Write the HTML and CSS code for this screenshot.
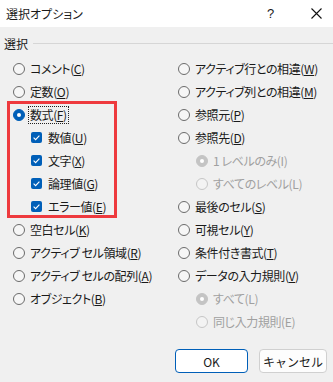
FILE: index.html
```html
<!DOCTYPE html>
<html lang="ja">
<head>
  <meta charset="UTF-8" />
  <title>選択オプション</title>
  <link rel="stylesheet" href="styles.css">
</head>
<body>
  <div class="dialog">
    <div class="titlebar">
      <span class="title">選択オプション</span>
      <span class="help">?</span>
      <span class="close">
        <svg width="11" height="11" viewBox="0 0 11 11"><path d="M0.5 0.5 L10.5 10.5 M10.5 0.5 L0.5 10.5" stroke="#111" stroke-width="1.1" fill="none"/></svg>
      </span>
    </div>

    <div class="group-label">
      <span>選択</span>
      <span class="rule"></span>
    </div>

    <div class="columns">
      <!-- 左の列 -->
      <div class="col">
        <div class="opt"><span class="radio"></span><span class="text">コメント(<u>C</u>)</span></div>
        <div class="opt"><span class="radio"></span><span class="text">定数(<u>O</u>)</span></div>

        <div class="highlight">
          <div class="opt"><span class="radio checked"></span><span class="text focus">数式(<u>F</u>)</span></div>
          <div class="opt sub"><span class="check"><svg width="11" height="11" viewBox="0 0 11 11"><path d="M2.6 5.7 L4.6 7.6 L8.4 3.6" stroke="#fff" stroke-width="1.1" fill="none"/></svg></span><span class="text">数値(<u>U</u>)</span></div>
          <div class="opt sub"><span class="check"><svg width="11" height="11" viewBox="0 0 11 11"><path d="M2.6 5.7 L4.6 7.6 L8.4 3.6" stroke="#fff" stroke-width="1.1" fill="none"/></svg></span><span class="text">文字(<u>X</u>)</span></div>
          <div class="opt sub"><span class="check"><svg width="11" height="11" viewBox="0 0 11 11"><path d="M2.6 5.7 L4.6 7.6 L8.4 3.6" stroke="#fff" stroke-width="1.1" fill="none"/></svg></span><span class="text">論理値(<u>G</u>)</span></div>
          <div class="opt sub"><span class="check"><svg width="11" height="11" viewBox="0 0 11 11"><path d="M2.6 5.7 L4.6 7.6 L8.4 3.6" stroke="#fff" stroke-width="1.1" fill="none"/></svg></span><span class="text">エラー値(<u>E</u>)</span></div>
        </div>

        <div class="opt"><span class="radio"></span><span class="text">空白セル(<u>K</u>)</span></div>
        <div class="opt"><span class="radio"></span><span class="text">アクティブ セル領域(<u>R</u>)</span></div>
        <div class="opt"><span class="radio"></span><span class="text">アクティブ セルの配列(<u>A</u>)</span></div>
        <div class="opt"><span class="radio"></span><span class="text">オブジェクト(<u>B</u>)</span></div>
      </div>

      <!-- 右の列 -->
      <div class="col">
        <div class="opt"><span class="radio"></span><span class="text">アクティブ行との相違(<u>W</u>)</span></div>
        <div class="opt"><span class="radio"></span><span class="text">アクティブ列との相違(<u>M</u>)</span></div>
        <div class="opt"><span class="radio"></span><span class="text">参照元(<u>P</u>)</span></div>
        <div class="opt"><span class="radio"></span><span class="text">参照先(<u>D</u>)</span></div>
        <div class="opt sub disabled"><span class="radio checked"></span><span class="text">1 レベルのみ(I)</span></div>
        <div class="opt sub disabled"><span class="radio"></span><span class="text">すべてのレベル(L)</span></div>
        <div class="opt"><span class="radio"></span><span class="text">最後のセル(<u>S</u>)</span></div>
        <div class="opt"><span class="radio"></span><span class="text">可視セル(<u>Y</u>)</span></div>
        <div class="opt"><span class="radio"></span><span class="text">条件付き書式(<u>T</u>)</span></div>
        <div class="opt"><span class="radio"></span><span class="text">データの入力規則(<u>V</u>)</span></div>
        <div class="opt sub disabled"><span class="radio checked"></span><span class="text">すべて(L)</span></div>
        <div class="opt sub disabled"><span class="radio"></span><span class="text">同じ入力規則(E)</span></div>
      </div>
    </div>

    <div class="buttons">
      <button class="btn btn-default">OK</button>
      <button class="btn">キャンセル</button>
    </div>
  </div>
</body>
</html>
```

FILE: styles.css
```css
body {
  margin: 0;
  padding: 0;
  background-color: #f0f0f0;
  font-family: "Noto Sans CJK JP", "Noto Sans", sans-serif;
  font-size: 12px;
  color: #1a1a1a;
  font-feature-settings: "palt";
}

.dialog {
  width: 333px;
  height: 382px;
  overflow: hidden;
}

.titlebar {
  height: 27px;
  background-color: #fff;
  display: flex;
  align-items: center;
  padding-left: 6px;
  box-sizing: border-box;
}

.title {
  flex: 1;
  line-height: 14px;
}

.help {
  width: 10px;
  margin-right: 34px;
  font-family: "Liberation Sans", sans-serif;
  font-size: 13px;
}

.close {
  width: 11px;
  height: 11px;
  margin-right: 11px;
  display: flex;
}

.group-label {
  height: 30px;
  display: flex;
  align-items: center;
  padding: 2px 0 0 4px;
  box-sizing: border-box;
  gap: 5px;
}

.rule {
  flex: 1;
  height: 1px;
  background-color: #d6d6d6;
}

.columns {
  display: grid;
  grid-template-columns: 165px 1fr;
  padding-left: 13px;
}

.opt {
  height: 23px;
  display: flex;
  align-items: center;
  white-space: nowrap;
}

.opt .text {
  line-height: 14px;
  letter-spacing: -0.4px;
}

.sub {
  padding-left: 18px;
}

.radio {
  width: 12px;
  height: 12px;
  border: 1px solid #6b6b6b;
  border-radius: 50%;
  background-color: #f6f6f6;
  box-sizing: border-box;
  margin-right: 5px;
  flex-shrink: 0;
  display: flex;
  align-items: center;
  justify-content: center;
}

.radio.checked {
  background-color: #005fb8;
  border-color: #005fb8;
}

.radio.checked::after {
  content: "";
  width: 4px;
  height: 4px;
  border-radius: 50%;
  background-color: #fff;
}

.check {
  width: 11px;
  height: 11px;
  border-radius: 2px;
  background-color: #005fb8;
  margin-right: 6px;
  flex-shrink: 0;
  display: flex;
}

.focus {
  outline: 1px dotted #222;
  outline-offset: 1px;
}

.disabled {
  color: #a0a0a0;
}

.disabled .radio {
  border-color: #c6c6c6;
  background-color: #f3f3f3;
}

.disabled .radio.checked {
  background-color: #c4c4c4;
  border-color: #c4c4c4;
}

.highlight {
  position: relative;
}

.highlight::after {
  content: "";
  position: absolute;
  left: -6px;
  top: -2px;
  width: 110px;
  bottom: 0;
  border: 3px solid #ee3a3e;
  box-sizing: border-box;
}

.buttons {
  display: flex;
  justify-content: flex-end;
  gap: 11px;
  padding: 16px 6px 0 0;
}

.btn {
  height: 24px;
  border: 1px solid #d0d0d0;
  border-radius: 4px;
  background-color: #fdfdfd;
  font-family: inherit;
  font-size: 12px;
  color: #1a1a1a;
  width: 68px;
  padding: 0;
}

.btn-default {
  width: 73px;
  border-color: #005fb8;
  background-color: #fff;
}
```
